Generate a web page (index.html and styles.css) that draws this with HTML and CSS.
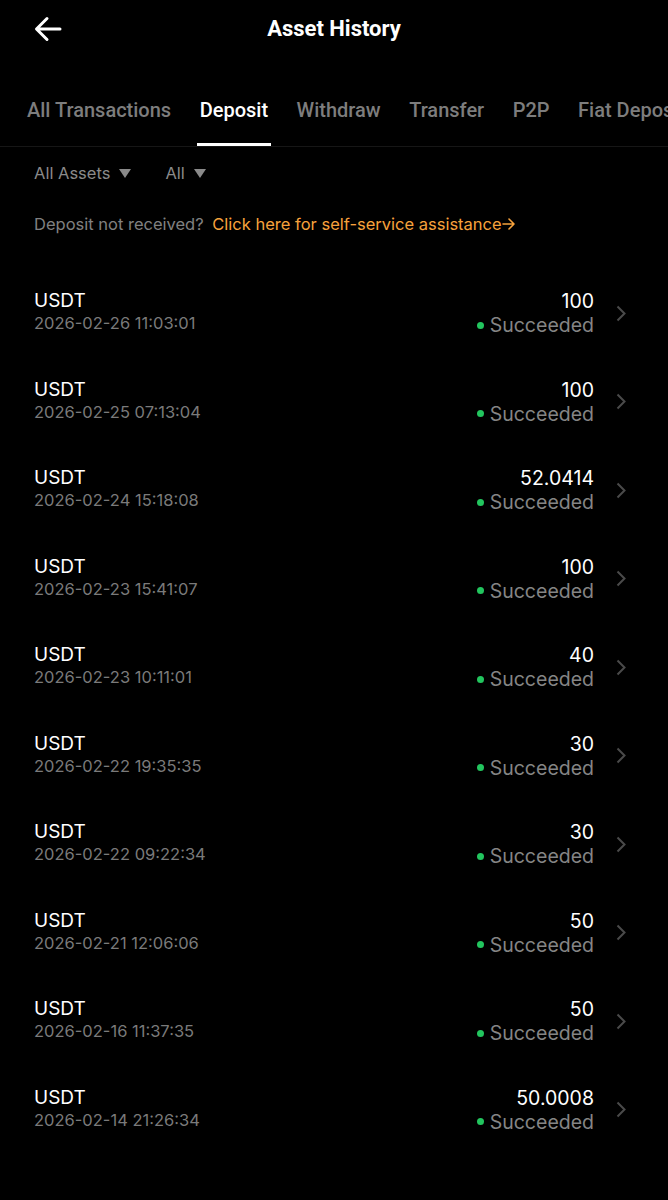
FILE: index.html
```html
<!DOCTYPE html>
<html lang="en">
  <head>
    <meta charset="UTF-8" />
    <meta name="viewport" content="width=device-width, initial-scale=1.0" />
    <title>Asset History</title>
    <link rel="stylesheet" href="styles.css">
  </head>
  <body>
    <header class="topbar">
      <svg class="back" width="28" height="26" viewBox="0 0 28 26">
        <path d="M26 13H3M13 2.5L2.5 13L13 23.5" fill="none" stroke="#fff" stroke-width="3" stroke-linecap="round" stroke-linejoin="round" />
      </svg>
      <h1>Asset History</h1>
    </header>

    <nav class="tabs">
      <span class="tab">All Transactions</span>
      <span class="tab active">Deposit</span>
      <span class="tab">Withdraw</span>
      <span class="tab">Transfer</span>
      <span class="tab">P2P</span>
      <span class="tab">Fiat Deposit</span>
    </nav>

    <div class="filters">
      <span class="filter">All Assets <i class="tri"></i></span>
      <span class="filter">All <i class="tri"></i></span>
    </div>

    <p class="help">
      Deposit not received?
      <a class="help-link">Click here for self-service assistance<svg width="14" height="14" viewBox="0 0 14 14"><path d="M1 7H12M7 2L12 7L7 12" fill="none" stroke="#f7a23c" stroke-width="1.6" stroke-linecap="round" stroke-linejoin="round" /></svg></a>
    </p>

    <ul class="list" id="list"></ul>

    <script>
      const rows = [
        ["2026-02-26 11:03:01", "100"],
        ["2026-02-25 07:13:04", "100"],
        ["2026-02-24 15:18:08", "52.0414"],
        ["2026-02-23 15:41:07", "100"],
        ["2026-02-23 10:11:01", "40"],
        ["2026-02-22 19:35:35", "30"],
        ["2026-02-22 09:22:34", "30"],
        ["2026-02-21 12:06:06", "50"],
        ["2026-02-16 11:37:35", "50"],
        ["2026-02-14 21:26:34", "50.0008"],
      ];
      const list = document.getElementById("list");
      for (let [date, amount] of rows) {
        list.innerHTML += `
          <li class="row">
            <div class="left">
              <div class="coin">USDT</div>
              <div class="date">${date}</div>
            </div>
            <div class="right">
              <div class="amount">${amount}</div>
              <div class="status"><i class="dot"></i>Succeeded</div>
            </div>
            <svg class="chev" width="10" height="17" viewBox="0 0 10 17"><path d="M1.5 1.5L8.5 8.5L1.5 15.5" fill="none" stroke="#4a4a4a" stroke-width="2" /></svg>
          </li>`;
      }
    </script>
  </body>
</html>
```

FILE: styles.css
```css
html,
body {
  margin: 0;
  background: #000;
}
body {
  font-family: Inter, "Noto Sans", sans-serif;
  color: #fff;
  overflow-x: hidden;
}
.topbar {
  position: relative;
  height: 56px;
  display: flex;
  align-items: center;
  justify-content: center;
}
.back {
  position: absolute;
  left: 34px;
  top: 16px;
}
.topbar h1 {
  margin: 0;
  font-family: Roboto, sans-serif;
  font-size: 22px;
  font-weight: 700;
}
.tabs {
  margin-top: 33px;
  display: flex;
  gap: 22.5px;
  padding-left: 24px;
  white-space: nowrap;
  border-bottom: 1px solid #161616;
  font-family: Roboto, sans-serif;
  font-size: 20px;
  font-weight: 500;
}
.tab {
  padding: 9px 3px 21px;
  color: #7d7d7d;
  border-bottom: 3px solid transparent;
}
.tab.active {
  color: #fff;
  border-bottom-color: #fff;
}
.filters {
  display: flex;
  gap: 34px;
  padding: 16px 34px 0;
  font-size: 16.5px;
  color: #8a8a8a;
}
.filter {
  display: flex;
  align-items: center;
  gap: 9px;
}
.tri {
  width: 0;
  height: 0;
  border-left: 6px solid transparent;
  border-right: 6px solid transparent;
  border-top: 9px solid #8a8a8a;
}
.help {
  margin: 31px 0 0;
  padding-left: 34px;
  font-size: 16.5px;
  color: #808080;
}
.help-link {
  margin-left: 4px;
  color: #f7a23c;
}
.help-link svg {
  vertical-align: -1px;
}
.list {
  list-style: none;
  margin: 35px 0 0;
  padding: 0;
}
.row {
  height: 88.5px;
  display: flex;
  align-items: center;
  padding: 0 42px 0 34px;
}
.left {
  flex: 1;
  padding-bottom: 4px;
}
.coin {
  font-size: 19px;
  line-height: 24px;
}
.date {
  font-size: 16.5px;
  line-height: 20px;
  color: #7a7a7a;
}
.right {
  text-align: right;
}
.amount {
  font-size: 19.5px;
  line-height: 24px;
}
.status {
  font-size: 19.5px;
  line-height: 24px;
  color: #858585;
  display: flex;
  align-items: center;
  gap: 6px;
}
.dot {
  width: 7px;
  height: 7px;
  border-radius: 50%;
  background: #22c55e;
}
.chev {
  margin-left: 22px;
}
```
